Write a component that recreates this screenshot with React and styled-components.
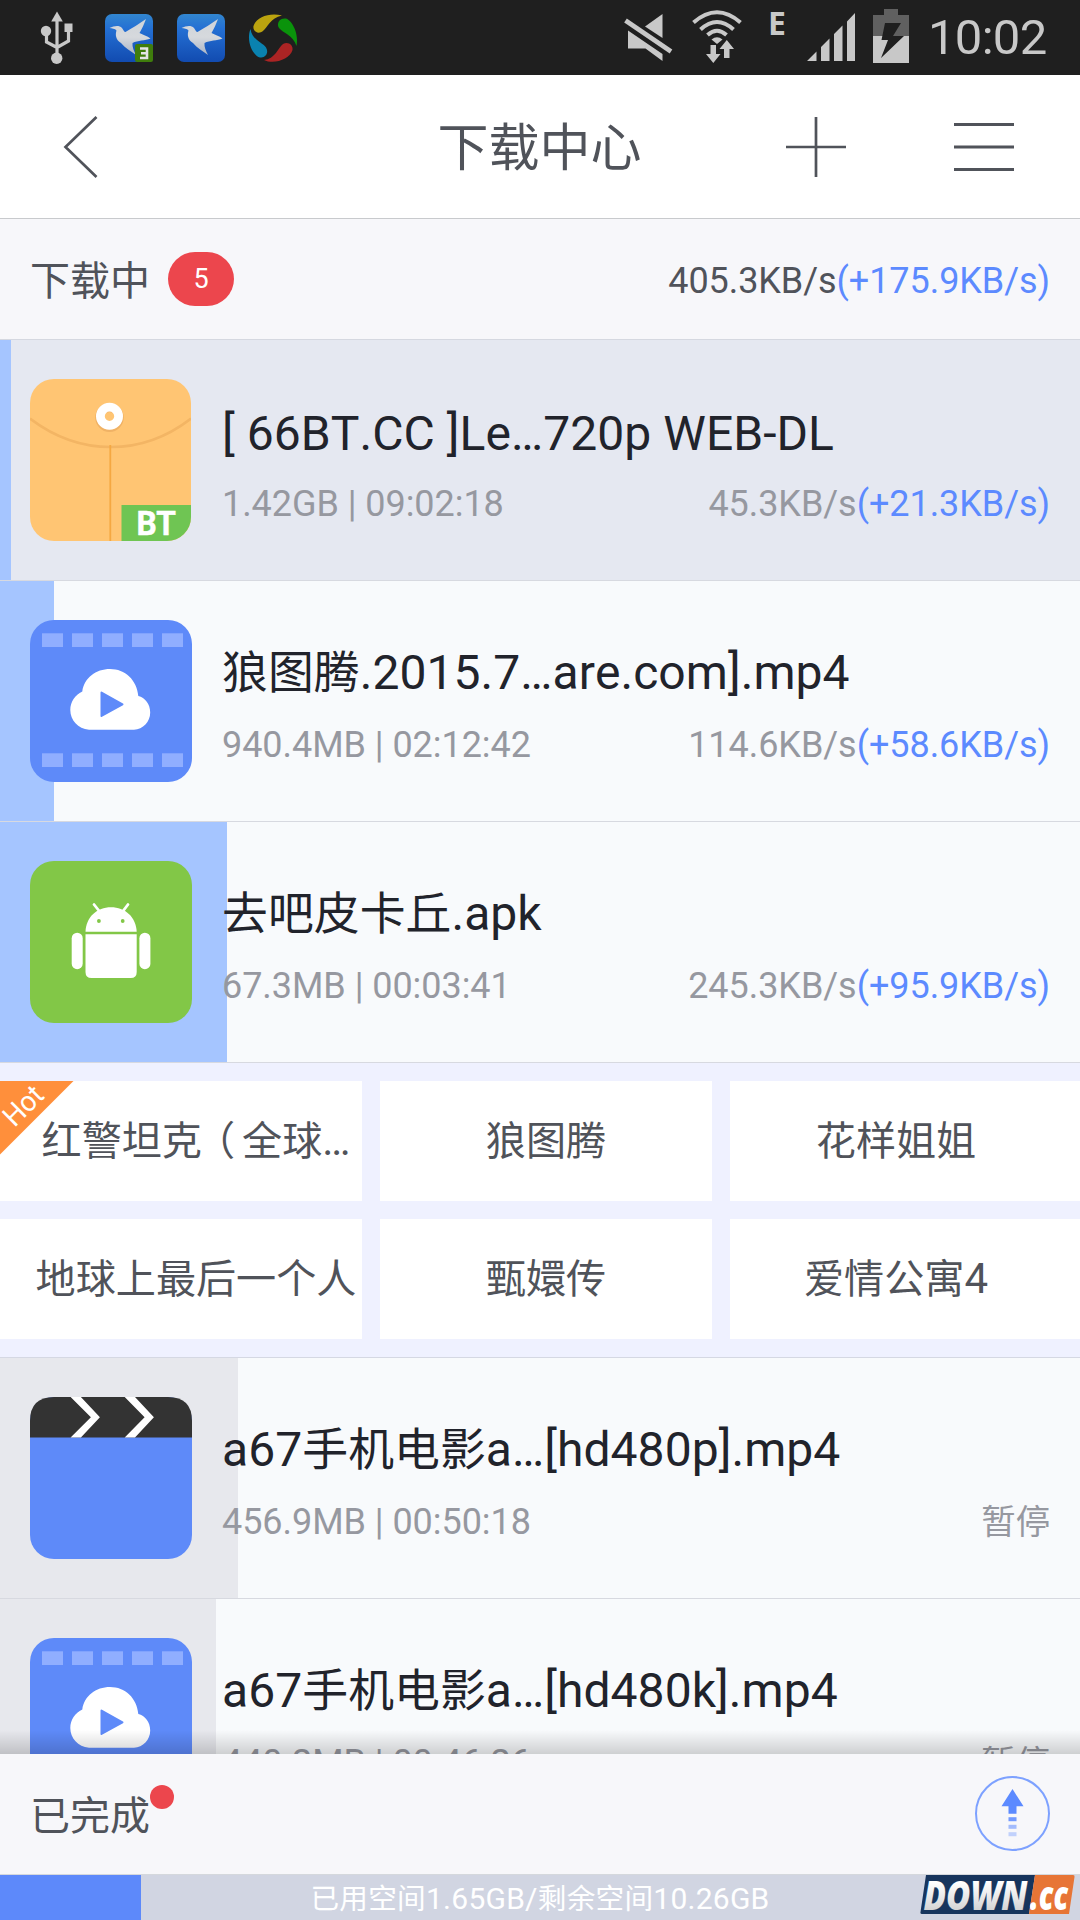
import React from 'react';
import styled, { createGlobalStyle } from 'styled-components';

const GlobalStyle = createGlobalStyle`
  * {
    box-sizing: border-box;
  }
  body {
    margin: 0;
    font-family: Roboto, 'Noto Sans CJK SC', sans-serif;
    color: #50535a;
  }
  svg {
    display: block;
    flex-shrink: 0;
    overflow: visible;
  }
`;

const Screen = styled.div`
  width: 1080px;
  height: 1920px;
  display: flex;
  flex-direction: column;
  overflow: hidden;
  background: #f8fafc;
`;

const StatusBar = styled.div`
  height: 75px;
  flex-shrink: 0;
  display: flex;
  justify-content: space-between;
  padding: 0 34px 0 37px;
  background: #1f1f1f;
`;

const StatusGroup = styled.div`
  display: flex;
  gap: ${(props) => props.$gap};
`;

const Clock = styled.span`
  width: 118px;
  margin-left: 1px;
  font-size: 49px;
  line-height: 75px;
  letter-spacing: -0.7px;
  white-space: nowrap;
  color: #c8c8c8;
`;

const Toolbar = styled.div`
  height: 144px;
  flex-shrink: 0;
  display: grid;
  grid-template-columns: 1fr auto 1fr;
  align-items: center;
  padding: 0 66px 0 62px;
  background: #fff;
  border-bottom: 1px solid #c8cacd;
`;

const Title = styled.h1`
  margin: 0;
  padding: 5px 0 0 3px;
  font-size: 51px;
  font-weight: 400;
  line-height: 72px;
`;

const Actions = styled.div`
  display: flex;
  justify-content: flex-end;
  gap: 108px;
`;

const SectionHeader = styled.div`
  height: 121px;
  flex-shrink: 0;
  display: flex;
  align-items: center;
  padding: 0 30px;
  background: #f7f7fa;
  border-bottom: 1px solid #d5d8e0;
`;

const SectionLabel = styled.span`
  padding-top: 5px;
  font-size: 40px;
  line-height: 60px;
`;

const Cjk = styled.span`
  font-size: 0.955em;
`;

const Paren = styled.span`
  margin: 0 7px 0 -7px;
`;

const Badge = styled.span`
  width: 66px;
  height: 54px;
  margin-left: 18px;
  border-radius: 27px;
  font-size: 27px;
  line-height: 54px;
  text-align: center;
  color: #fff;
  background: #ec464d;
`;

const TotalSpeed = styled.span`
  margin-left: auto;
  padding-top: 3px;
  font-size: 36px;
  line-height: 48px;
  letter-spacing: -0.06px;
`;

const Boost = styled.span`
  color: #5c8aff;
`;

const List = styled.div`
  flex: 1;
  min-height: 0;
  overflow: hidden;
`;

const Row = styled.div`
  height: 241px;
  display: flex;
  align-items: center;
  gap: 30px;
  padding: 0 30px;
  border-bottom: 1px solid #d7d9e0;
  background-color: ${(props) => (props.$pressed ? '#e5e8f1' : '#f8fafc')};
  background-image: ${(props) => {
    const color = props.$paused ? '#e7e8ed' : '#a5c5ff';
    return `linear-gradient(${color}, ${color})`;
  }};
  background-repeat: no-repeat;
  background-size: ${(props) => props.$progress}px 100%;
`;

const RowBody = styled.div`
  flex: 1;
  min-width: 0;
  display: flex;
  flex-direction: column;
  gap: 18px;
  padding-top: 10px;
`;

const FileName = styled.div`
  margin: ${(props) => (props.$latin ? '2px 0 -2px' : '0')};
  font-size: 48px;
  font-kerning: none;
  line-height: 60px;
  letter-spacing: 0.06px;
  white-space: nowrap;
  color: #21232b;
`;

const RowInfo = styled.div`
  display: flex;
  justify-content: space-between;
  font-size: 36px;
  line-height: 48px;
  letter-spacing: -0.05px;
  white-space: nowrap;
  color: #9698a0;
`;

const HotGrid = styled.div`
  display: grid;
  grid-template-columns: 362px 332px 350px;
  grid-auto-rows: 120px;
  gap: 18px;
  padding: 18px 0;
  background: #eff1ff;
  border-bottom: 1px solid #d5d8e3;
`;

const HotCard = styled.div`
  position: relative;
  display: flex;
  align-items: center;
  justify-content: center;
  padding-left: ${(props) => (props.$first ? '30px' : '0')};
  padding-right: ${(props) => (props.$last ? '18px' : '0')};
  font-size: 42px;
  line-height: 60px;
  white-space: nowrap;
  background: #fff;
`;

const HotRibbon = styled.svg`
  position: absolute;
  top: 0;
  left: 0;
`;

const Footer = styled.div`
  position: relative;
  height: 121px;
  flex-shrink: 0;
  display: flex;
  align-items: center;
  justify-content: space-between;
  padding: 0 30px 1px;
  background: #f7f7fa;
  border-bottom: 1px solid #d5d8dd;

  &::before {
    content: '';
    position: absolute;
    top: -24px;
    left: 0;
    right: 0;
    height: 24px;
    background: linear-gradient(rgba(0, 0, 0, 0), rgba(0, 0, 0, 0.17));
  }
`;

const Done = styled(SectionLabel)`
  position: relative;
  padding-top: 6px;
`;

const Dot = styled.i`
  position: absolute;
  top: 4px;
  left: 120px;
  width: 24px;
  height: 24px;
  border-radius: 50%;
  background: #ec464d;
`;

const Storage = styled.div`
  position: relative;
  height: 45px;
  flex-shrink: 0;
  font-size: 30px;
  line-height: 48px;
  letter-spacing: 0.25px;
  text-align: center;
  color: #fff;
  background: linear-gradient(#5d89fa, #5d89fa) no-repeat 0 0 / 141px 100% #d1d5e2;
`;

const Watermark = styled.svg`
  position: absolute;
  right: 4px;
  top: -1px;
  letter-spacing: 0;
`;

// CJK runs are set a little smaller than the latin around them
const Mixed = ({ children }) =>
  children.split(/(（|[\u3000-\u9fff]+)/).map((part, i) => {
    if (i % 2 === 0) return part;
    return <Cjk key={i}>{part === '（' ? <Paren>{part}</Paren> : part}</Cjk>;
  });

const UsbIcon = () => (
  <svg width="38" height="75" viewBox="37 0 38 75" fill="#c8c8c8">
    <path d="M57 11.5L62.8 21.5H51.2Z" />
    <rect x="64.5" y="23.5" width="8" height="8.5" />
    <circle cx="46" cy="31" r="5.2" />
    <circle cx="56.7" cy="58.3" r="5.7" />
    <path d="M57 20V56M46.5 33V42L57 47.5M68.5 30V41L57 47.5" fill="none" stroke="#c8c8c8" strokeWidth="3.2" />
  </svg>
);

const BirdIcon = ({ badge }) => (
  <svg width="48" height="75" viewBox="0 0 48 75">
    <defs>
      <linearGradient id="birdBg" x1="0" y1="0" x2="0" y2="1">
        <stop offset="0" stopColor="#3286cf" />
        <stop offset="0.3" stopColor="#2470d4" />
        <stop offset="1" stopColor="#124bb0" />
      </linearGradient>
      <linearGradient id="birdBody" x1="0" y1="0" x2="0" y2="1">
        <stop offset="0" stopColor="#cfd4d9" />
        <stop offset="0.5" stopColor="#d6d9dd" />
        <stop offset="1" stopColor="#a9b4c6" />
      </linearGradient>
    </defs>
    <rect y="14" width="48" height="48" rx="7" fill="url(#birdBg)" />
    <path
      d="M4.5 28C9 26 14 25 17 28C18.5 30 19 32 20.5 32C27 28 34 24 41 19C39 24 37 29 34.5 33C38 34.5 42 36 45.5 38.5C40 41 33 40 27.5 43C27 47 29 51 31 55C26 51 20 48 16 43C11 40 10 35 11.5 30.5C10 28.5 7 28.5 4.5 28Z"
      fill="url(#birdBody)"
    />
    {badge && (
      <>
        <rect x="30" y="44" width="18" height="18" rx="2" fill="#3f7d0c" />
        <path d="M35 48.5H42V58H35M36 53.3H42" fill="none" stroke="#e4e4e4" strokeWidth="2.6" />
      </>
    )}
  </svg>
);

const SwirlIcon = () => (
  <svg width="48" height="75" viewBox="249 0 48 75">
    <path d="M282 15.5C270 12 256 17 253.5 26C252.5 31 258 35 263 31C268 27 270 18 282 15.5Z" fill="#bba30f" />
    <path d="M296.5 46C299 35 293 21 286 18.5C280 17.5 276 23 279 28C283 33 293 35 296.5 46Z" fill="#0a930b" />
    <path d="M264 60C274 65 290 59 292.5 50C293.5 45 288 41 283 44C278 48 275 59 264 60Z" fill="#ab2424" />
    <path d="M250.5 29C246 40 252 55 260 57.5C266 58.5 269 52 266 47.5C262 42 252 40 250.5 29Z" fill="#0a82b0" />
  </svg>
);

const MuteIcon = () => (
  <svg width="50" height="75" viewBox="623 0 50 75" fill="#c8c8c8">
    <path d="M662.5 14V38L645 26.5Z" />
    <path d="M628 30.5L662.5 54V61L645.5 48.5H628Z" />
    <path d="M625.5 20.5L671 51.5" stroke="#c8c8c8" strokeWidth="4.6" />
  </svg>
);

const WifiIcon = () => (
  <svg width="52" height="75" viewBox="691 0 52 75" fill="none" stroke="#c8c8c8" strokeWidth="4">
    <path d="M693.5 22.5Q717 2 740.5 22.5" />
    <path d="M700.5 29.5Q717 14.5 733.5 29.5" />
    <path d="M707.5 35Q717 26.5 726.5 35" />
    <path d="M711.5 39.5Q717 35 722.5 39.5L717 44Z" fill="#c8c8c8" stroke="none" />
    <path d="M710.5 45H716V54H720.5L713.3 63L706 54H710.5Z" fill="#c8c8c8" stroke="none" />
    <path d="M724 58V49H719.5L726.8 40L734 49H729.5V58Z" fill="#c8c8c8" stroke="none" />
  </svg>
);

const EdgeIcon = () => (
  <svg width="28" height="75" viewBox="761 0 28 75">
    <text x="768" y="35" fontFamily="Open Sans" fontWeight="700" fontSize="32" fill="#c8c8c8">E</text>
  </svg>
);

const SignalIcon = () => (
  <svg width="48" height="75" viewBox="807 0 48 75" fill="#c8c8c8">
    <path d="M807 61L816.5 51.5V61ZM821 61V47L829.5 38.5V61ZM834 61V34L842.5 25.5V61ZM847 61V21.5L855 13V61Z" />
  </svg>
);

const BatteryIcon = () => (
  <svg width="36" height="75" viewBox="873 0 36 75">
    <path d="M884 9H898V15H909V36H873V15H884Z" fill="#606060" />
    <rect x="873" y="36" width="36" height="27" fill="#c8c8c8" />
    <path d="M885 23H901L893 36H904L881 58L888 40H881.5Z" fill="#1f1f1f" />
  </svg>
);

const BackIcon = () => (
  <svg width="35" height="60" viewBox="62 117 35 60">
    <path d="M96.5 117L65.5 147L96.5 177" fill="none" stroke="#50535a" strokeWidth="2.7" />
  </svg>
);

const PlusIcon = () => (
  <svg width="60" height="60" viewBox="0 0 60 60">
    <path d="M0 30H60M30 0V60" stroke="#50535a" strokeWidth="2.7" />
  </svg>
);

const MenuIcon = () => (
  <svg width="60" height="60" viewBox="0 0 60 60">
    <path d="M0 7.5H60M0 30H60M0 52.5H60" stroke="#50535a" strokeWidth="2.9" />
  </svg>
);

const TorrentIcon = () => (
  <svg width="162" height="162" viewBox="0 0 162 162">
    <clipPath id="torrentClip">
      <rect width="161" height="162" rx="24" />
    </clipPath>
    <g clipPath="url(#torrentClip)">
      <rect width="162" height="162" fill="#ffc573" />
      <path d="M0 39.5C50 77.5 112 77.5 161 39.5" fill="none" stroke="#f3b564" strokeWidth="2.6" />
      <path d="M80.3 66V162" stroke="#f5a842" strokeWidth="1.8" />
      <circle cx="79.5" cy="38.6" r="10" fill="none" stroke="#f0b265" strokeWidth="8.6" />
      <circle cx="79.5" cy="37.3" r="9.1" fill="none" stroke="#fff" strokeWidth="8.8" />
      <rect x="91.5" y="126" width="71" height="36" fill="#6fc553" />
    </g>
    <text x="106.5" y="156" fontFamily="Roboto" fontWeight="700" fontSize="33" textLength="39.5" lengthAdjust="spacingAndGlyphs" fill="#fff" stroke="#fff" strokeWidth="0.5">BT</text>
  </svg>
);

const HOLES = [12, 42, 72, 102, 132];

const VideoIcon = () => (
  <svg width="162" height="162" viewBox="0 0 162 162">
    <rect width="162" height="162" rx="24" fill="#5e8af9" />
    {HOLES.map((x) => (
      <g key={x} fill="#90aeff">
        <rect x={x} y="13.3" width="21" height="13.7" />
        <rect x={x} y="133.3" width="21" height="13.7" />
      </g>
    ))}
    <path
      d="M59 109.7C48 109 40.3 100 40.3 90C40.3 82 45 75 52.3 71.5C54 58 66 49 80 49C95 49 107 60 108.3 76C115 77.5 120.2 84 120.2 92.5C120.2 102 113 109.2 104 109.7Z"
      fill="#fff"
    />
    <path d="M71.5 72.5L92.5 84.3L71.5 96Z" fill="#5e8af9" stroke="#5e8af9" strokeWidth="2" strokeLinejoin="round" />
  </svg>
);

const ApkIcon = () => (
  <svg width="162" height="162" viewBox="0 0 162 162" fill="#fff">
    <rect width="162" height="162" rx="24" fill="#82c747" />
    <path d="M64 43.5L70 51M98 43.5L92.3 51" stroke="#fff" strokeWidth="2.8" strokeLinecap="round" />
    <path d="M55.5 70.7C56 56 67 46.3 81 46.3C95 46.3 106 56 106.7 70.7Z" />
    <circle cx="68.9" cy="60" r="1.9" fill="#82c747" />
    <circle cx="92.7" cy="60" r="1.9" fill="#82c747" />
    <path d="M55.5 73.3H106.7V111Q106.7 117 100.7 117H61.5Q55.5 117 55.5 111Z" />
    <rect x="41.7" y="71.7" width="11" height="36.5" rx="5.5" />
    <rect x="109.4" y="71.7" width="11" height="36.5" rx="5.5" />
  </svg>
);

const ClapIcon = () => (
  <svg width="162" height="162" viewBox="0 0 162 162">
    <rect width="162" height="162" rx="24" fill="#5e8af9" />
    <path d="M0 40.5V24Q0 0 24 0H138Q162 0 162 24V40.5Z" fill="#333" />
    <path d="M40.6 0H50.9L69.9 20.3L50.9 40.5H40.6L60.9 20.3ZM94.7 0H105L123.9 20.3L105 40.5H94.7L114.6 20.3Z" fill="#fff" />
  </svg>
);

const UploadIcon = () => (
  <svg width="75" height="75" viewBox="0 0 75 75" fill="#5c8aff">
    <circle cx="37.5" cy="37.5" r="36.5" fill="none" stroke="#7da1ff" strokeWidth="2" />
    <path d="M37.5 13L48.5 30.3H41.5V37.7H33.5V30.3H26.5Z" />
    <rect x="33.5" y="41.2" width="8" height="4" opacity="0.85" />
    <rect x="33.5" y="48.8" width="8" height="4" opacity="0.55" />
    <rect x="33.5" y="56.2" width="8" height="4" opacity="0.35" />
  </svg>
);

const icons = {
  bt: <TorrentIcon />,
  video: <VideoIcon />,
  apk: <ApkIcon />,
  clap: <ClapIcon />,
};

const downloading = [
  { icon: 'bt', name: '[ 66BT.CC ]Le…720p WEB-DL', info: '1.42GB | 09:02:18', speed: '45.3KB/s', boost: '(+21.3KB/s)', progress: 11, pressed: true, latin: true },
  { icon: 'video', name: '狼图腾.2015.7…are.com].mp4', info: '940.4MB | 02:12:42', speed: '114.6KB/s', boost: '(+58.6KB/s)', progress: 54 },
  { icon: 'apk', name: '去吧皮卡丘.apk', info: '67.3MB | 00:03:41', speed: '245.3KB/s', boost: '(+95.9KB/s)', progress: 227 },
];

const paused = [
  { icon: 'clap', name: 'a67手机电影a…[hd480p].mp4', info: '456.9MB | 00:50:18', progress: 238 },
  { icon: 'video', name: 'a67手机电影a…[hd480k].mp4', info: '440.2MB | 00:46:26', progress: 216 },
];

const hotWords = ['红警坦克（全球…', '狼图腾', '花样姐姐', '地球上最后一个人', '甄嬛传', '爱情公寓4'];

const Task = ({ task, isPaused }) => (
  <Row $progress={task.progress} $pressed={task.pressed} $paused={isPaused}>
    {icons[task.icon]}
    <RowBody>
      <FileName $latin={task.latin}>
        <Mixed>{task.name}</Mixed>
      </FileName>
      <RowInfo>
        <span>{task.info}</span>
        {isPaused ? (
          <Cjk>暂停</Cjk>
        ) : (
          <span>
            {task.speed}
            <Boost>{task.boost}</Boost>
          </span>
        )}
      </RowInfo>
    </RowBody>
  </Row>
);

const App = () => (
  <>
    <GlobalStyle />
    <Screen>
      <StatusBar>
        <StatusGroup $gap="30px">
          <UsbIcon />
          <StatusGroup $gap="24px">
            <BirdIcon badge />
            <BirdIcon />
            <SwirlIcon />
          </StatusGroup>
        </StatusGroup>
        <StatusGroup $gap="18px">
          <MuteIcon />
          <WifiIcon />
          <EdgeIcon />
          <SignalIcon />
          <BatteryIcon />
          <Clock>10:02</Clock>
        </StatusGroup>
      </StatusBar>

      <Toolbar>
        <BackIcon />
        <Title>下载中心</Title>
        <Actions>
          <PlusIcon />
          <MenuIcon />
        </Actions>
      </Toolbar>

      <SectionHeader>
        <SectionLabel>下载中</SectionLabel>
        <Badge>5</Badge>
        <TotalSpeed>
          405.3KB/s<Boost>(+175.9KB/s)</Boost>
        </TotalSpeed>
      </SectionHeader>

      <List>
        {downloading.map((task) => (
          <Task key={task.name} task={task} />
        ))}
        <HotGrid>
          {hotWords.map((word, i) => (
            <HotCard key={word} $first={i % 3 === 0} $last={i % 3 === 2}>
              {i === 0 && (
                <HotRibbon width="74" height="74" viewBox="0 0 74 74">
                  <path d="M0 0H73.5L0 73.5Z" fill="#ff8f3b" />
                  <text transform="translate(14.5 47) rotate(-45)" fontFamily="Roboto" fontSize="28.5" textLength="44" lengthAdjust="spacingAndGlyphs" fill="#fff">Hot</text>
                </HotRibbon>
              )}
              <span>
                <Mixed>{word}</Mixed>
              </span>
            </HotCard>
          ))}
        </HotGrid>
        {paused.map((task) => (
          <Task key={task.name} task={task} isPaused />
        ))}
      </List>

      <Footer>
        <Done>
          已完成
          <Dot />
        </Done>
        <UploadIcon />
      </Footer>

      <Storage>
        <Mixed>已用空间1.65GB/剩余空间10.26GB</Mixed>
        <Watermark width="156" height="41" viewBox="0 0 156 41">
          <defs>
            <linearGradient id="silver" x1="0" y1="0" x2="0" y2="1">
              <stop offset="0.3" stopColor="#fff" />
              <stop offset="0.8" stopColor="#d4d4d4" />
            </linearGradient>
          </defs>
          <path d="M6 1H115L109 40H2Q0 40 0.5 38Z" fill="#17355d" />
          <path d="M115 1H153Q155 1 154.5 3L149 40H109Z" fill="#e77536" />
          <g fontFamily="Open Sans" fontStyle="italic" fontWeight="800">
            <text x="3.5" y="35.5" fontSize="41" textLength="104" lengthAdjust="spacingAndGlyphs" fill="url(#silver)">DOWN</text>
            <text x="110" y="35.5" fontSize="41" textLength="38" lengthAdjust="spacingAndGlyphs" fill="#fff">.cc</text>
          </g>
        </Watermark>
      </Storage>
    </Screen>
  </>
);

export default App;
